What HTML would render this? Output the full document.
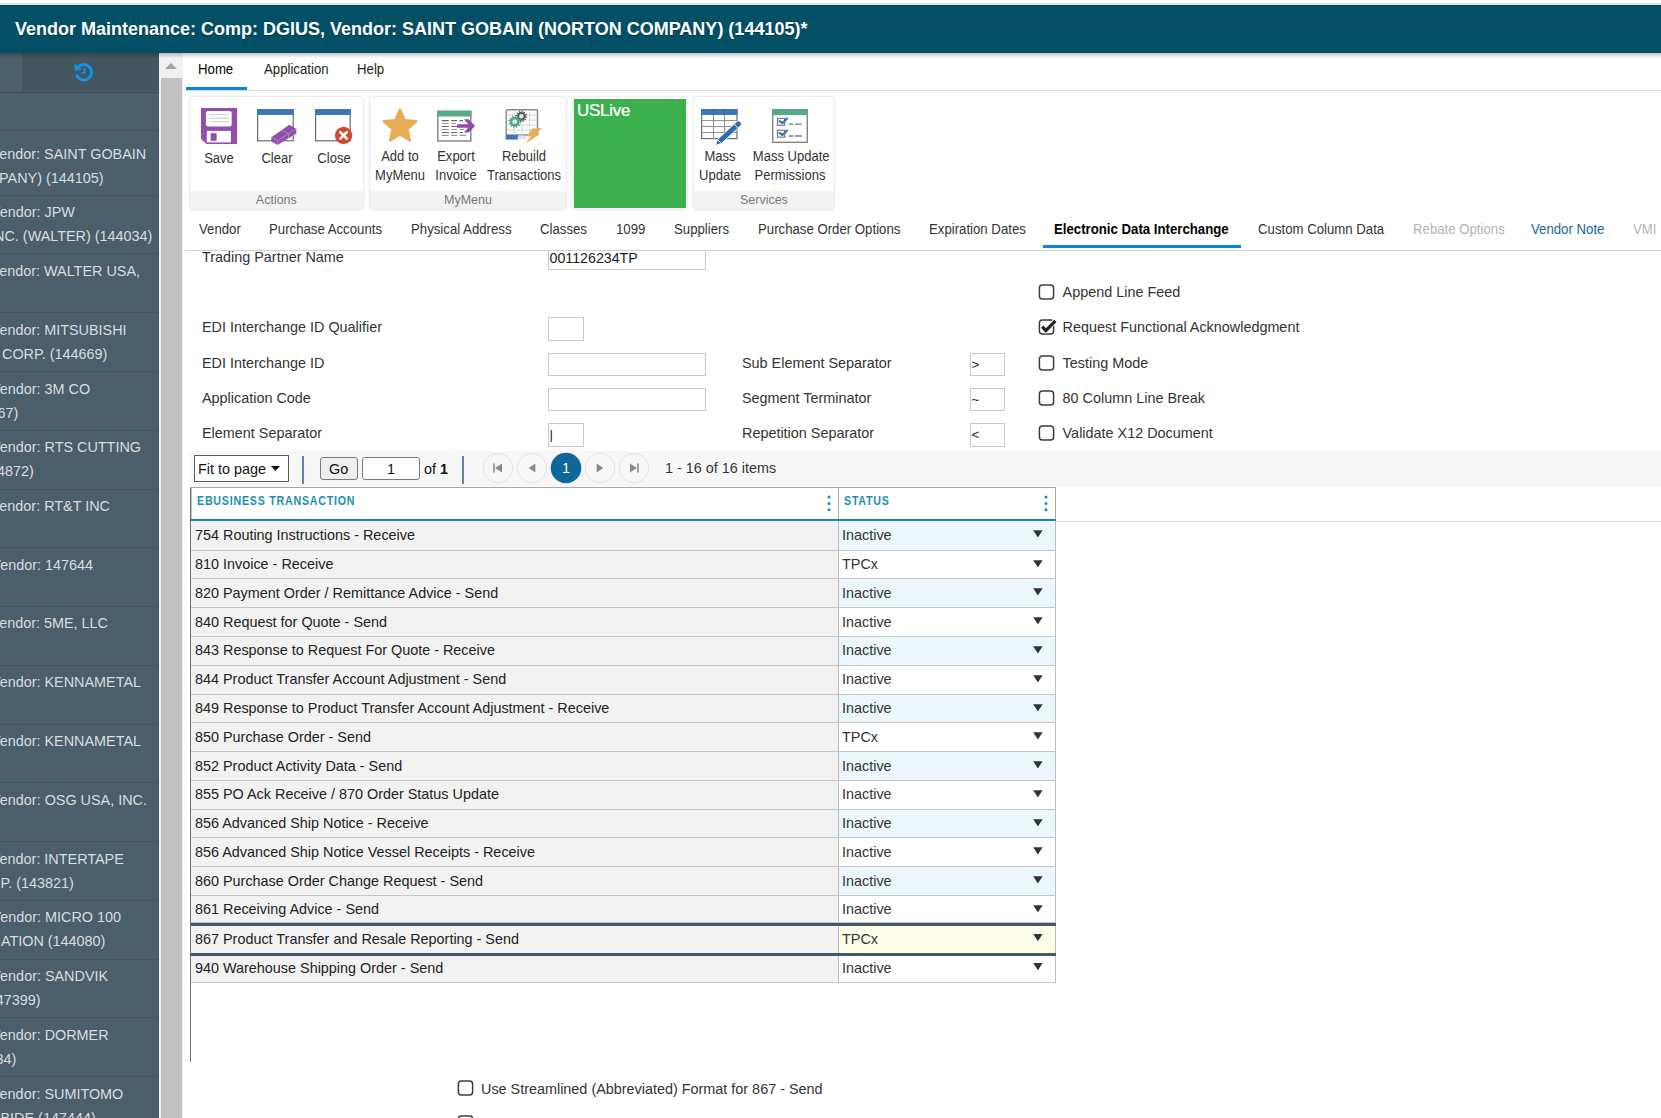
<!DOCTYPE html>
<html lang="en">
<head>
<meta charset="utf-8">
<title>Vendor Maintenance</title>
<style>
*{box-sizing:border-box;margin:0;padding:0}
html,body{width:1661px;height:1118px;overflow:hidden;background:#fff}
body{position:relative;font-family:"Liberation Sans",Arial,sans-serif;font-size:15px;color:#333}
.abs{position:absolute}
.t{position:absolute;white-space:nowrap;line-height:1}
/* header */
#topstrip{left:0;top:0;width:1661px;height:5px;background:linear-gradient(#fff 0,#fff 3px,#dcdcdc 3px,#dcdcdc 4px,#e9e8e8 4px)}
#hdr{left:0;top:5px;width:1661px;height:48px;background:#035066;border-top:1px solid #02435a}
#hdr .t{left:15px;top:14px;font-size:18px;font-weight:bold;color:#fff;text-shadow:0 1px 1px rgba(0,0,0,.35)}
/* sidebar */
#side{left:0;top:53px;width:159px;height:1065px;background:#4b5f6b;overflow:hidden}
#side .tabbar{left:0;top:0;width:159px;height:40px;background:#4b5f6b;border-bottom:1px solid #3c4c56}
#side .tabbar .l{left:22px;top:0;width:137px;height:38px;background:#43565f}
.si{position:absolute;left:0;width:159px;border-top:1px solid #43555f;color:#d9dddf;font-size:14.4px;line-height:24px;white-space:nowrap}
.si i{position:absolute;font-style:normal}
/* scrollbar */
#sb{left:159px;top:53px;width:24px;height:1065px;background:#f1f1f1}
#sb .thumb{left:2px;top:25px;width:21px;height:1040px;background:#c1c1c1}
#sb .arr{left:6px;top:10px;width:0;height:0;border-left:6px solid transparent;border-right:6px solid transparent;border-bottom:6px solid #a3a3a3}
/* ribbon tabs */
.rt{font-size:14px;color:#222;top:62px;transform:scaleX(.943);transform-origin:0 50%}
#rtline{left:186px;top:90px;width:1475px;height:1px;background:#dcdcdc}
#rtact{left:186px;top:87px;width:61px;height:3px;background:#0a84dc}

.grp{background:#fff;border:1px solid #ececec;border-radius:4px;box-shadow:0 0 2px rgba(0,0,0,.08);overflow:hidden}
.gf{left:0;bottom:0;width:100%;height:18px;background:#f3f3f3;text-align:center;color:#7a7a7a;font-size:13px;line-height:17px}
.gf b{font-weight:normal;display:inline-block}
.rl{position:absolute;width:80px;text-align:center;font-size:14px;line-height:19px;color:#333;white-space:nowrap;transform:scaleX(.93)}
.rb{transform:scaleX(.96)}

.st{top:222px;font-size:14px;transform:scaleX(.943);transform-origin:0 50%}
.fl{font-size:14.4px;color:#333;line-height:18px}
.inp{position:absolute;background:#fff;border:1px solid #c9c9c9;font-size:14.2px;line-height:21px;padding-left:.6px;color:#1c1c1c;white-space:nowrap}
.gh{font-size:12.5px;font-weight:bold;color:#1b8fb3;letter-spacing:.9px;transform:scaleX(.853);transform-origin:0 50%}
.gr{position:absolute;left:191px;width:865px;font-size:14.4px;color:#222;border-bottom:1px solid #c6c6c6}
.gr .c1{position:absolute;left:0;top:0;bottom:0;width:647px;background:#f2f2f2;padding-left:4px;white-space:nowrap}
.gr .c2{position:absolute;left:647px;top:0;bottom:0;width:218px;border-left:1px solid #bdbdbd;border-right:1px solid #bdbdbd;padding-left:3px;color:#333;white-space:nowrap}
.gr s{position:absolute;right:12.4px;top:9.2px;width:9.4px;height:7.2px;background:#333;clip-path:polygon(0 0,100% 0,50% 100%)}
.gr.sel{border-top:3px solid #43596a;border-bottom:3px solid #43596a}
</style>
</head>
<body>
<div id="topstrip" class="abs"></div>
<div id="hdr" class="abs"><div class="t">Vendor Maintenance: Comp: DGIUS, Vendor: SAINT GOBAIN (NORTON COMPANY) (144105)*</div></div>

<div id="side" class="abs">
  <div class="tabbar abs"><div class="l abs"></div>
    <svg class="abs" style="left:73px;top:8px" width="22" height="22" viewBox="0 0 20 20"><path d="M4.2 6.2 A7 7 0 1 1 3.6 13.4" fill="none" stroke="#1193e8" stroke-width="2.6" stroke-linecap="round"/><path d="M1 2.2 L1.6 9 L8.2 7.6 Z" fill="#1193e8"/><path d="M10.6 6.3 V10.8 H7.6" fill="none" stroke="#1193e8" stroke-width="1.7"/></svg>
  </div>
  <div class="si" style="top:77px;height:65px"><i style="top:11px;right:12.8px">Vendor: SAINT GOBAIN</i><i style="top:35px;right:55.4px">MPANY) (144105)</i></div>
  <div class="si" style="top:142px;height:58px"><i style="top:4px;right:84.2px">Vendor: JPW</i><i style="top:28px;right:6.6px">INC. (WALTER) (144034)</i></div>
  <div class="si" style="top:200px;height:59px"><i style="top:5px;right:19.0px">Vendor: WALTER USA,</i></div>
  <div class="si" style="top:259px;height:59px"><i style="top:5px;right:32.4px">Vendor: MITSUBISHI</i><i style="top:29px;right:51.7px">S CORP. (144669)</i></div>
  <div class="si" style="top:318px;height:59px"><i style="top:5px;right:68.9px">Vendor: 3M CO</i><i style="top:29px;right:140.8px">467)</i></div>
  <div class="si" style="top:377px;height:59px"><i style="top:4px;right:18.0px">Vendor: RTS CUTTING</i><i style="top:28px;right:125.1px">44872)</i></div>
  <div class="si" style="top:436px;height:58px"><i style="top:4px;right:49.0px">Vendor: RT&amp;T INC</i></div>
  <div class="si" style="top:494px;height:59px"><i style="top:5px;right:66.0px">Vendor: 147644</i></div>
  <div class="si" style="top:553px;height:59px"><i style="top:4px;right:51.0px">Vendor: 5ME, LLC</i></div>
  <div class="si" style="top:612px;height:59px"><i style="top:4px;right:18.0px">Vendor: KENNAMETAL</i></div>
  <div class="si" style="top:671px;height:58px"><i style="top:4px;right:18.0px">Vendor: KENNAMETAL</i></div>
  <div class="si" style="top:729px;height:59px"><i style="top:5px;right:12.0px">Vendor: OSG USA, INC.</i></div>
  <div class="si" style="top:788px;height:59px"><i style="top:5px;right:35.2px">Vendor: INTERTAPE</i><i style="top:29px;right:85.2px">RP. (143821)</i></div>
  <div class="si" style="top:847px;height:59px"><i style="top:4px;right:38.0px">Vendor: MICRO 100</i><i style="top:28px;right:53.6px">RATION (144080)</i></div>
  <div class="si" style="top:906px;height:58px"><i style="top:4px;right:50.9px">Vendor: SANDVIK</i><i style="top:28px;right:118.5px">147399)</i></div>
  <div class="si" style="top:964px;height:59px"><i style="top:5px;right:50.4px">Vendor: DORMER</i><i style="top:29px;right:142.6px">634)</i></div>
  <div class="si" style="top:1023px;height:59px"><i style="top:5px;right:35.7px">Vendor: SUMITOMO</i><i style="top:29px;right:63.3px">RBIDE (147444)</i></div>

</div>
<div class="abs" style="left:0;top:53px;width:1661px;height:5px;background:linear-gradient(rgba(0,0,0,.24),rgba(0,0,0,0));z-index:5"></div>
<div id="sb" class="abs"><div class="arr abs"></div><div class="thumb abs"></div></div>

<!-- ribbon tabs -->
<div class="t rt" style="left:198px;color:#000">Home</div>
<div class="t rt" style="left:264px">Application</div>
<div class="t rt" style="left:357px">Help</div>
<div id="rtline" class="abs"></div>
<div id="rtact" class="abs"></div>

<!-- ribbon groups -->
<div class="grp abs" style="left:189px;top:96px;width:175px;height:114px"><div class="gf abs"><b class="rb">Actions</b></div></div>
<div class="grp abs" style="left:369px;top:96px;width:198px;height:114px"><div class="gf abs"><b class="rb">MyMenu</b></div></div>
<div class="grp abs" style="left:572px;top:96px;width:116px;height:114px"><div class="abs" style="left:1px;top:2px;width:112px;height:109px;background:#3cb04c"></div><div class="t" style="left:4px;top:5px;font-size:17px;color:#fff;letter-spacing:-.25px;text-shadow:0 0 .5px #fff">USLive</div></div>
<div class="grp abs" style="left:693px;top:96px;width:142px;height:114px"><div class="gf abs"><b class="rb">Services</b></div></div>

<!-- icons -->
<svg class="abs" style="left:201px;top:108px" width="36" height="36" viewBox="0 0 36 36"><path d="M0 0H36V36H5.5L0 31Z" fill="#8f4fab"/><rect x="4.9" y="2.9" width="25.8" height="15.6" rx="2.2" fill="#fff"/><path d="M8.4 6.7H27.8M8.4 10.2H27.8M8.4 13.8H27.8" stroke="#c9c9c9" stroke-width="1"/><rect x="5.8" y="22.9" width="24.1" height="11.5" fill="#fff"/><rect x="9.7" y="25.2" width="5.9" height="7.6" fill="#8f4fab"/></svg>

<svg class="abs" style="left:257px;top:109px" width="40" height="37" viewBox="0 0 40 37"><rect x=".6" y=".6" width="35.6" height="31.2" fill="#fff" stroke="#6b6b6b" stroke-width="1.2"/><rect x="0" y="0" width="36.8" height="6" fill="#3b78b5"/><path d="M14.3 28.2L32.4 15.8L39.3 20L39.3 24.4L20.6 36L14.3 32.6Z" fill="#8f4fab"/><path d="M14.3 28.2L20.6 31.6L39.3 20M20.6 31.6V36M25 20.8L31.5 24.8V29.2" fill="none" stroke="#b68acb" stroke-width=".8"/></svg>

<svg class="abs" style="left:315px;top:109px" width="40" height="37" viewBox="0 0 40 37"><rect x=".6" y=".6" width="34.6" height="31.2" fill="#fff" stroke="#6b6b6b" stroke-width="1.2"/><rect x="0" y="0" width="35.8" height="6" fill="#3b78b5"/><circle cx="28.6" cy="26.4" r="8.7" fill="#cf4a33"/><path d="M25.4 23.2L31.8 29.6M31.8 23.2L25.4 29.6" stroke="#fff" stroke-width="2.6" stroke-linecap="round"/></svg>

<svg class="abs" style="left:382px;top:108px" width="36" height="35" viewBox="0 0 36 35"><path d="M18 1.5L22.6 12.2L34.2 13.3L25.4 21L28 32.4L18 26.4L8 32.4L10.6 21L1.8 13.3L13.4 12.2Z" fill="#e9ab55" stroke="#e9ab55" stroke-width="2.4" stroke-linejoin="round"/></svg>

<svg class="abs" style="left:437px;top:110px" width="40" height="33" viewBox="0 0 40 33"><rect x=".8" y="1.4" width="33" height="29.6" fill="#fff" stroke="#808080" stroke-width="1.4"/><rect x="0" y=".7" width="34.4" height="5.8" fill="#56ab86"/><path d="M4.9 10.6H11.8M4.9 16.5H11.8M4.9 22.5H11.8M14.1 10.6H20.1M14.1 16.5H20.1M14.1 22.5H20.1M22.6 10.6H26M22.6 22.5H26" stroke="#666" stroke-width="1.1"/><path d="M4.9 13.5H11.8M4.9 19.5H11.8M4.9 25.4H11.8M14.1 13.5H19M14.1 19.5H20.1M14.1 25.4H20.1M22.6 19.5H27M22.6 25.4H29" stroke="#9a9a9a" stroke-width="1.1"/><path d="M20.1 14.2H31.2L26.8 9.2H31.6L38.1 15.9L31.6 22.6H26.8L31.2 17.8H20.1Z" fill="#8c4ba9"/></svg>

<svg class="abs" style="left:505px;top:108px" width="39" height="38" viewBox="0 0 39 38"><rect x="1.3" y="1.7" width="31.2" height="25.4" rx="1" fill="#fff" stroke="#8a8a8a" stroke-width="1.5"/><path d="M1.5 7H32M1.5 12H32M1.5 17H32M1.5 22H32M9.3 2V27M17 2V27M24.7 2V27" stroke="#d6d6d6" stroke-width="1"/><rect x=".7" y="27" width="12.2" height="4.6" fill="#3b78b5"/><rect x="12.9" y="27.6" width="8.4" height="3.6" fill="#e2e2e2"/><path d="M20.70 8.30L22.37 8.86L22.26 9.61L20.49 9.63L20.12 10.45L21.29 11.78L20.82 12.36L19.28 11.50L18.55 12.02L18.90 13.76L18.19 14.03L17.29 12.51L16.40 12.60L15.84 14.27L15.09 14.16L15.07 12.39L14.25 12.02L12.92 13.19L12.34 12.72L13.20 11.18L12.68 10.45L10.94 10.80L10.67 10.09L12.19 9.19L12.10 8.30L10.43 7.74L10.54 6.99L12.31 6.97L12.68 6.15L11.51 4.82L11.98 4.24L13.52 5.10L14.25 4.58L13.90 2.84L14.61 2.57L15.51 4.09L16.40 4.00L16.96 2.33L17.71 2.44L17.73 4.21L18.55 4.58L19.88 3.41L20.46 3.88L19.60 5.42L20.12 6.15L21.86 5.80L22.13 6.51L20.61 7.41ZM14.20 8.30a2.20 2.20 0 1 0 4.40 0a2.20 2.20 0 1 0 -4.40 0Z" fill="#5a5a5a" fill-rule="evenodd"/><path d="M14.50 13.70L16.27 14.32L16.14 15.14L14.27 15.18L13.86 16.10L15.08 17.52L14.56 18.17L12.91 17.27L12.10 17.86L12.45 19.70L11.67 20.00L10.70 18.40L9.70 18.50L9.08 20.27L8.26 20.14L8.22 18.27L7.30 17.86L5.88 19.08L5.23 18.56L6.13 16.91L5.54 16.10L3.70 16.45L3.40 15.67L5.00 14.70L4.90 13.70L3.13 13.08L3.26 12.26L5.13 12.22L5.54 11.30L4.32 9.88L4.84 9.23L6.49 10.13L7.30 9.54L6.95 7.70L7.73 7.40L8.70 9.00L9.70 8.90L10.32 7.13L11.14 7.26L11.18 9.13L12.10 9.54L13.52 8.32L14.17 8.84L13.27 10.49L13.86 11.30L15.70 10.95L16.00 11.73L14.40 12.70ZM7.30 13.70a2.40 2.40 0 1 0 4.80 0a2.40 2.40 0 1 0 -4.80 0Z" fill="#4aa982" fill-rule="evenodd"/><path d="M27 20.4L36.8 20L31 26L34.4 26.2L19.8 36L26 28.4L21.6 28.2Z" fill="#eaad57"/></svg>

<svg class="abs" style="left:701px;top:109px" width="41" height="38" viewBox="0 0 41 38"><rect x=".6" y=".6" width="35.4" height="29" fill="#fff" stroke="#6f6f6f" stroke-width="1.2"/><path d="M.6 11.6H36M.6 17.5H36M.6 23.5H36M12.5 1V30M23.6 1V30" stroke="#8e8e8e" stroke-width="1"/><rect x="0" y="0" width="36.6" height="6" fill="#3b78b5"/><path d="M12.5 0V6M23.6 0V6" stroke="#2f659d" stroke-width="1"/><path d="M14.4 36.2L16.54 30.41L35.7 12.74A2.8 2.8 0 0 1 39.5 16.86L20.34 34.53Z" fill="#2f6db1" stroke="#fff" stroke-width=".8"/><path d="M37 19.16L33.2 15.04M20.34 34.53L16.54 30.41" stroke="#fff" stroke-width=".9"/></svg>

<svg class="abs" style="left:772px;top:109px" width="37" height="35" viewBox="0 0 37 35"><rect x=".7" y=".7" width="34.6" height="32.6" fill="#fff" stroke="#858585" stroke-width="1.4"/><rect x="0" y=".2" width="36" height="5.9" fill="#56ab86"/><rect x="5.5" y="9.4" width="7.2" height="6.9" fill="#fff" stroke="#7a7a7a" stroke-width="1.2"/><rect x="5.5" y="21.3" width="7.2" height="6.9" fill="#fff" stroke="#7a7a7a" stroke-width="1.2"/><path d="M7.6 12L10.4 14.2L15 9.6M7.6 23.9L10.4 26.1L15 21.5" fill="none" stroke="#2f73b7" stroke-width="2.1" stroke-linecap="round" stroke-linejoin="round"/><path d="M16.9 15.1H21.3M23.1 15.1H29.9M16.9 27H21.3M23.1 27H29.9" stroke="#777" stroke-width="1.4"/></svg>

<!-- ribbon labels -->
<div class="rl" style="left:179px;top:149px">Save</div>
<div class="rl" style="left:237px;top:149px">Clear</div>
<div class="rl" style="left:294px;top:149px">Close</div>
<div class="rl" style="left:360px;top:147px">Add to<br>MyMenu</div>
<div class="rl" style="left:416px;top:147px">Export<br>Invoice</div>
<div class="rl" style="left:484px;top:147px">Rebuild<br>Transactions</div>
<div class="rl" style="left:680px;top:147px">Mass<br>Update</div>
<div class="rl" style="left:750px;top:147px">Mass Update<br>Permissions</div>
<!--RIBBON-->
<!--REST-->
<!-- sub tabs -->
<div class="t st" style="left:199px;color:#333">Vendor</div>
<div class="t st" style="left:269px;color:#333">Purchase Accounts</div>
<div class="t st" style="left:411px;color:#333">Physical Address</div>
<div class="t st" style="left:540px;color:#333">Classes</div>
<div class="t st" style="left:616px;color:#333">1099</div>
<div class="t st" style="left:674px;color:#333">Suppliers</div>
<div class="t st" style="left:758px;color:#333">Purchase Order Options</div>
<div class="t st" style="left:929px;color:#333">Expiration Dates</div>
<div class="t st" style="left:1054px;color:#000;font-weight:bold">Electronic Data Interchange</div>
<div class="t st" style="left:1258px;color:#333">Custom Column Data</div>
<div class="t st" style="left:1413px;color:#b4b4b4">Rebate Options</div>
<div class="t st" style="left:1531px;color:#15689c">Vendor Note</div>
<div class="t st" style="left:1633px;color:#b4b4b4">VMI</div>
<div class="abs" style="left:186px;top:250px;width:1475px;height:1px;background:#cfcfcf"></div>
<div class="abs" style="left:1043px;top:245px;width:198px;height:3px;background:#0a84dc"></div>
<!-- form -->
<div class="abs" style="left:186px;top:251px;width:1475px;height:200px;overflow:hidden" id="form">
<div class="t fl" style="left:16px;top:-3px">Trading Partner Name</div>
<div class="inp" style="left:362px;top:-4px;width:158px;height:23px">001126234TP</div>
<div class="t fl" style="left:16px;top:67px">EDI Interchange ID Qualifier</div>
<div class="inp" style="left:362px;top:66px;width:36px;height:24px"></div>
<div class="t fl" style="left:16px;top:103px">EDI Interchange ID</div>
<div class="inp" style="left:362px;top:102px;width:158px;height:23px"></div>
<div class="t fl" style="left:16px;top:138px">Application Code</div>
<div class="inp" style="left:362px;top:137px;width:158px;height:23px"></div>
<div class="t fl" style="left:16px;top:173px">Element Separator</div>
<div class="inp" style="left:362px;top:172px;width:36px;height:24px;font-size:13.33px;line-height:22px">|</div>
<div class="t fl" style="left:556px;top:103px">Sub Element Separator</div>
<div class="inp" style="left:784px;top:102px;width:35px;height:23px;font-size:13.33px;line-height:22px">&gt;</div>
<div class="t fl" style="left:556px;top:138px">Segment Terminator</div>
<div class="inp" style="left:784px;top:137px;width:35px;height:23px;font-size:13.33px;line-height:22px">~</div>
<div class="t fl" style="left:556px;top:173px">Repetition Separator</div>
<div class="inp" style="left:784px;top:172px;width:35px;height:24px;font-size:13.33px;line-height:22px">&lt;</div>
<svg class="abs" style="left:852px;top:32px" width="20" height="18" viewBox="0 0 20 18"><rect x="1.4" y="1.9" width="14.2" height="14.2" rx="3" fill="#fff" stroke="#3c3c3c" stroke-width="1.5"/></svg>
<div class="t fl" style="left:876.6px;top:32px">Append Line Feed</div>
<svg class="abs" style="left:852px;top:67px" width="20" height="18" viewBox="0 0 20 18"><rect x="1.4" y="1.9" width="14.2" height="14.2" rx="3" fill="#fff" stroke="#3c3c3c" stroke-width="1.5"/><path d="M4.2 8.6L7.8 12.6L17.4 2.8" fill="none" stroke="#fff" stroke-width="4.8"/><path d="M4.2 8.6L7.8 12.6L17.4 2.8" fill="none" stroke="#222" stroke-width="3.2"/></svg>
<div class="t fl" style="left:876.6px;top:67px">Request Functional Acknowledgment</div>
<svg class="abs" style="left:852px;top:103px" width="20" height="18" viewBox="0 0 20 18"><rect x="1.4" y="1.9" width="14.2" height="14.2" rx="3" fill="#fff" stroke="#3c3c3c" stroke-width="1.5"/></svg>
<div class="t fl" style="left:876.6px;top:103px">Testing Mode</div>
<svg class="abs" style="left:852px;top:138px" width="20" height="18" viewBox="0 0 20 18"><rect x="1.4" y="1.9" width="14.2" height="14.2" rx="3" fill="#fff" stroke="#3c3c3c" stroke-width="1.5"/></svg>
<div class="t fl" style="left:876.6px;top:138px">80 Column Line Break</div>
<svg class="abs" style="left:852px;top:173px" width="20" height="18" viewBox="0 0 20 18"><rect x="1.4" y="1.9" width="14.2" height="14.2" rx="3" fill="#fff" stroke="#3c3c3c" stroke-width="1.5"/></svg>
<div class="t fl" style="left:876.6px;top:173px">Validate X12 Document</div>
</div>
<!-- pager -->
<div class="abs" style="left:190px;top:451px;width:1471px;height:36px;background:#f7f7f7"></div>
<div class="abs" style="left:194px;top:455px;width:95px;height:27px;background:#fff;border:1px solid #5a5a5a"></div>
<div class="t fl" style="left:198px;top:460px;color:#111">Fit to page</div>
<div class="abs" style="left:271px;top:466px;width:9px;height:5px;background:#111;clip-path:polygon(0 0,100% 0,50% 100%)"></div>
<div class="abs" style="left:302px;top:456px;width:2px;height:28px;background:#6484a6"></div>
<div class="abs" style="left:462px;top:456px;width:2px;height:28px;background:#6484a6"></div>
<div class="abs" style="left:320px;top:457px;width:38px;height:23px;background:#efefef;border:1px solid #7a7a7a;border-radius:3px"></div>
<div class="t fl" style="left:329px;top:460px;color:#111">Go</div>
<div class="abs" style="left:362px;top:457px;width:58px;height:23px;background:#fff;border:1px solid #7a7a7a;border-radius:3px"></div>
<div class="t fl" style="left:387px;top:460px;color:#111">1</div>
<div class="t fl" style="left:424px;top:460px;color:#111">of <b>1</b></div>
<svg class="abs" style="left:482px;top:452px" width="32" height="32" viewBox="0 0 32 32"><circle cx="16" cy="16" r="14.8" fill="#f7f7f7" stroke="#e3e3e3" stroke-width="1"/><path d="M12 11.6V20.4" stroke="#8a8a8a" stroke-width="1.6"/><path d="M20 11.6V20.4L13.2 16Z" fill="#8a8a8a"/></svg>
<svg class="abs" style="left:516px;top:452px" width="32" height="32" viewBox="0 0 32 32"><circle cx="16" cy="16" r="14.8" fill="#f7f7f7" stroke="#e3e3e3" stroke-width="1"/><path d="M19.4 11.6V20.4L12.6 16Z" fill="#8a8a8a"/></svg>
<svg class="abs" style="left:550px;top:452px" width="32" height="32" viewBox="0 0 32 32"><circle cx="16" cy="16" r="15.3" fill="#0f6698"/><text x="16" y="21" text-anchor="middle" font-family="Liberation Sans,Arial,sans-serif" font-size="14.4" fill="#fff">1</text></svg>
<svg class="abs" style="left:584px;top:452px" width="32" height="32" viewBox="0 0 32 32"><circle cx="16" cy="16" r="14.8" fill="#f7f7f7" stroke="#e3e3e3" stroke-width="1"/><path d="M12.6 11.6V20.4L19.4 16Z" fill="#8a8a8a"/></svg>
<svg class="abs" style="left:618px;top:452px" width="32" height="32" viewBox="0 0 32 32"><circle cx="16" cy="16" r="14.8" fill="#f7f7f7" stroke="#e3e3e3" stroke-width="1"/><path d="M20 11.6V20.4" stroke="#8a8a8a" stroke-width="1.6"/><path d="M12 11.6V20.4L18.8 16Z" fill="#8a8a8a"/></svg>
<div class="t fl" style="left:665px;top:459px">1 - 16 of 16 items</div>
<!-- grid -->
<div class="abs" style="left:190px;top:487px;width:866px;height:34px;background:#fff;border:1px solid #a9a9a9;border-bottom:none"></div>
<div class="abs" style="left:838px;top:487px;width:1px;height:34px;background:#a9a9a9"></div>
<div class="abs" style="left:190px;top:519px;width:866px;height:2px;background:#198cae"></div>
<div class="abs" style="left:1056px;top:521px;width:605px;height:1px;background:#d9d9d9"></div>
<div class="t gh" style="left:197px;top:495px">EBUSINESS TRANSACTION</div>
<div class="t gh" style="left:844px;top:495px">STATUS</div>
<svg class="abs" style="left:826px;top:494px" width="6" height="18" viewBox="0 0 6 18"><circle cx="3" cy="3" r="1.5" fill="#198cae"/><circle cx="3" cy="9.4" r="1.5" fill="#198cae"/><circle cx="3" cy="15.7" r="1.5" fill="#198cae"/></svg>
<svg class="abs" style="left:1043px;top:494px" width="6" height="18" viewBox="0 0 6 18"><circle cx="3" cy="3" r="1.5" fill="#198cae"/><circle cx="3" cy="9.4" r="1.5" fill="#198cae"/><circle cx="3" cy="15.7" r="1.5" fill="#198cae"/></svg>
<div class="gr" style="top:521px;height:30px"><div class="c1" style="line-height:29px">754 Routing Instructions - Receive</div><div class="c2" style="background:#ebf7fd;line-height:29px">Inactive<s></s></div></div>
<div class="gr" style="top:551px;height:28px"><div class="c1" style="line-height:27px">810 Invoice - Receive</div><div class="c2" style="background:#fff;line-height:27px">TPCx<s></s></div></div>
<div class="gr" style="top:579px;height:29px"><div class="c1" style="line-height:28px">820 Payment Order / Remittance Advice - Send</div><div class="c2" style="background:#ebf7fd;line-height:28px">Inactive<s></s></div></div>
<div class="gr" style="top:608px;height:29px"><div class="c1" style="line-height:28px">840 Request for Quote - Send</div><div class="c2" style="background:#fff;line-height:28px">Inactive<s></s></div></div>
<div class="gr" style="top:637px;height:29px"><div class="c1" style="line-height:26px">843 Response to Request For Quote - Receive</div><div class="c2" style="background:#ebf7fd;line-height:26px">Inactive<s></s></div></div>
<div class="gr" style="top:666px;height:29px"><div class="c1" style="line-height:26px">844 Product Transfer Account Adjustment - Send</div><div class="c2" style="background:#fff;line-height:26px">Inactive<s></s></div></div>
<div class="gr" style="top:695px;height:28px"><div class="c1" style="line-height:27px">849 Response to Product Transfer Account Adjustment - Receive</div><div class="c2" style="background:#ebf7fd;line-height:27px">Inactive<s></s></div></div>
<div class="gr" style="top:723px;height:29px"><div class="c1" style="line-height:28px">850 Purchase Order - Send</div><div class="c2" style="background:#fff;line-height:28px">TPCx<s></s></div></div>
<div class="gr" style="top:752px;height:29px"><div class="c1" style="line-height:28px">852 Product Activity Data - Send</div><div class="c2" style="background:#ebf7fd;line-height:28px">Inactive<s></s></div></div>
<div class="gr" style="top:781px;height:29px"><div class="c1" style="line-height:26px">855 PO Ack Receive / 870 Order Status Update</div><div class="c2" style="background:#fff;line-height:26px">Inactive<s></s></div></div>
<div class="gr" style="top:810px;height:28px"><div class="c1" style="line-height:27px">856 Advanced Ship Notice - Receive</div><div class="c2" style="background:#ebf7fd;line-height:27px">Inactive<s></s></div></div>
<div class="gr" style="top:838px;height:29px"><div class="c1" style="line-height:28px">856 Advanced Ship Notice Vessel Receipts - Receive</div><div class="c2" style="background:#fff;line-height:28px">Inactive<s></s></div></div>
<div class="gr" style="top:867px;height:29px"><div class="c1" style="line-height:28px">860 Purchase Order Change Request - Send</div><div class="c2" style="background:#ebf7fd;line-height:28px">Inactive<s></s></div></div>
<div class="gr" style="top:896px;height:27px"><div class="c1" style="line-height:26px">861 Receiving Advice - Send</div><div class="c2" style="background:#fff;line-height:26px">Inactive<s></s></div></div>
<div class="gr sel" style="top:923px;height:33px"><div class="c1" style="line-height:27px">867 Product Transfer and Resale Reporting - Send</div><div class="c2" style="background:#fffde9;line-height:27px">TPCx<s style="top:8px"></s></div></div>
<div class="gr" style="top:956px;height:27px"><div class="c1" style="line-height:24px">940 Warehouse Shipping Order - Send</div><div class="c2" style="background:#fff;line-height:24px">Inactive<s style="top:7px"></s></div></div>
<div class="abs" style="left:190px;top:488px;width:1px;height:574px;background:#6e6e6e"></div><div class="abs" style="left:191px;top:488px;width:1px;height:31px;background:#c4c4c4"></div>
<!-- bottom -->
<svg class="abs" style="left:457px;top:1079px" width="20" height="18" viewBox="0 0 20 18"><rect x="1.4" y="1.9" width="14.2" height="14.2" rx="3" fill="#fff" stroke="#3c3c3c" stroke-width="1.5"/></svg>
<div class="t fl" style="left:481px;top:1080px">Use Streamlined (Abbreviated) Format for 867 - Send</div>
<svg class="abs" style="left:457px;top:1114px" width="20" height="18" viewBox="0 0 20 18"><rect x="1.4" y="1.9" width="14.2" height="14.2" rx="3" fill="#fff" stroke="#3c3c3c" stroke-width="1.5"/></svg>
<!--/REST-->
</body>
</html>
